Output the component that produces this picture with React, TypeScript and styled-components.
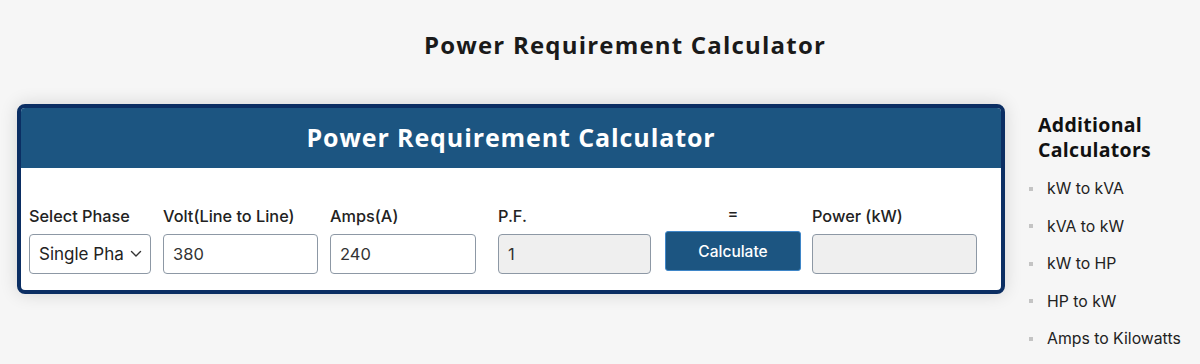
import React from "react";
import styled, { createGlobalStyle } from "styled-components";

const Global = createGlobalStyle`
  html, body { margin: 0; padding: 0; background: #f6f6f6; }
  body { font-family: Inter, "Liberation Sans", Arial, sans-serif; color: #222; }
  * { box-sizing: border-box; }
`;

const Page = styled.div`
  width: 1200px;
  height: 364px;
  overflow: hidden;
  background: #f6f6f6;
`;

const TopTitle = styled.h1`
  margin: 0;
  padding: 30px 0 0 50px;
  height: 104px;
  text-align: center;
  font-family: "Open Sans", "Liberation Sans", sans-serif;
  font-weight: 700;
  font-size: 24px;
  line-height: 30px;
  color: #1a1a1a;
  letter-spacing: 1.2px;
`;

const Row = styled.div`
  display: flex;
  align-items: flex-start;
  padding-left: 17px;
`;

const Card = styled.div`
  width: 988px;
  height: 190px;
  border: 4px solid #0b2e63;
  border-radius: 8px;
  background: #fff;
  overflow: hidden;
  box-shadow: 0 0 18px rgba(0, 0, 0, 0.14);
`;

const CardHeader = styled.div`
  height: 60px;
  background: #1c5581;
  display: flex;
  align-items: center;
  justify-content: center;
  color: #fff;
  font-family: "Open Sans", "Liberation Sans", sans-serif;
  font-weight: 700;
  font-size: 25px;
  letter-spacing: 0.9px;
  padding-bottom: 2px;
`;

const Fields = styled.div`
  display: flex;
  align-items: flex-end;
  padding: 36px 0 0 8px;
`;

const Field = styled.div<{ $w: number; $ml: number }>`
  width: ${(p) => p.$w}px;
  margin-left: ${(p) => p.$ml}px;
  display: flex;
  flex-direction: column;
`;

const Label = styled.div<{ $center?: boolean }>`
  font-size: 16.3px;
  font-weight: 500;
  line-height: 19px;
  color: #222;
  margin-bottom: 8px;
  text-align: ${(p) => (p.$center ? "center" : "left")};
  white-space: nowrap;
`;

const Box = styled.div<{ $disabled?: boolean }>`
  height: 40px;
  border: 1px solid #8d98a5;
  border-radius: 4px;
  background: ${(p) => (p.$disabled ? "#efefef" : "#fff")};
  display: flex;
  align-items: center;
  padding: 0 9px;
  font-size: 16.5px;
  color: #333;
`;

const SelectBox = styled(Box)`
  padding: 0 8px 0 9px;
  justify-content: space-between;
  font-size: 17px;
  color: #222;
  white-space: nowrap;
`;

const Button = styled.button`
  height: 40px;
  margin-bottom: 3px;
  border: 1px solid #3f86c8;
  border-radius: 3px;
  background: #1c5581;
  color: #fff;
  font-family: Inter, "Liberation Sans", sans-serif;
  font-size: 15.5px;
  font-weight: 500;
  cursor: pointer;
`;

const Sidebar = styled.div`
  padding: 8px 0 0 24px;
`;

const SideTitle = styled.h2`
  margin: 0 0 8px 9px;
  font-family: "Open Sans", "Liberation Sans", sans-serif;
  font-weight: 700;
  font-size: 19.5px;
  line-height: 25px;
  letter-spacing: 0.3px;
  color: #111;
`;

const List = styled.ul`
  margin: 0;
  padding: 0;
  list-style: none;
`;

const Item = styled.li`
  display: flex;
  align-items: center;
  height: 37.5px;
  font-size: 15.8px;
  color: #222;
  white-space: nowrap;
  &::before {
    content: "";
    width: 4px;
    height: 4px;
    background: #c4c4c4;
    margin-right: 14px;
  }
`;

const Chevron = () => (
  <svg width="12" height="8" viewBox="0 0 12 8" fill="none">
    <path d="M1.5 1.5 L6 6 L10.5 1.5" stroke="#333" strokeWidth="1.4" strokeLinecap="round" strokeLinejoin="round" />
  </svg>
);

export default function App() {
  return (
    <Page>
      <Global />
      <TopTitle>Power Requirement Calculator</TopTitle>
      <Row>
        <Card>
          <CardHeader>Power Requirement Calculator</CardHeader>
          <Fields>
            <Field $w={122} $ml={0}>
              <Label>Select Phase</Label>
              <SelectBox>
                <span>Single Pha</span>
                <Chevron />
              </SelectBox>
            </Field>
            <Field $w={155} $ml={12}>
              <Label>Volt(Line to Line)</Label>
              <Box>380</Box>
            </Field>
            <Field $w={146} $ml={12}>
              <Label>Amps(A)</Label>
              <Box>240</Box>
            </Field>
            <Field $w={153} $ml={22}>
              <Label>P.F.</Label>
              <Box $disabled>1</Box>
            </Field>
            <Field $w={136} $ml={14}>
              <Label $center>=</Label>
              <Button>Calculate</Button>
            </Field>
            <Field $w={165} $ml={11}>
              <Label>Power (kW)</Label>
              <Box $disabled />
            </Field>
          </Fields>
        </Card>
        <Sidebar>
          <SideTitle>
            Additional
            <br />
            Calculators
          </SideTitle>
          <List>
            <Item>kW to kVA</Item>
            <Item>kVA to kW</Item>
            <Item>kW to HP</Item>
            <Item>HP to kW</Item>
            <Item>Amps to Kilowatts</Item>
          </List>
        </Sidebar>
      </Row>
    </Page>
  );
}
